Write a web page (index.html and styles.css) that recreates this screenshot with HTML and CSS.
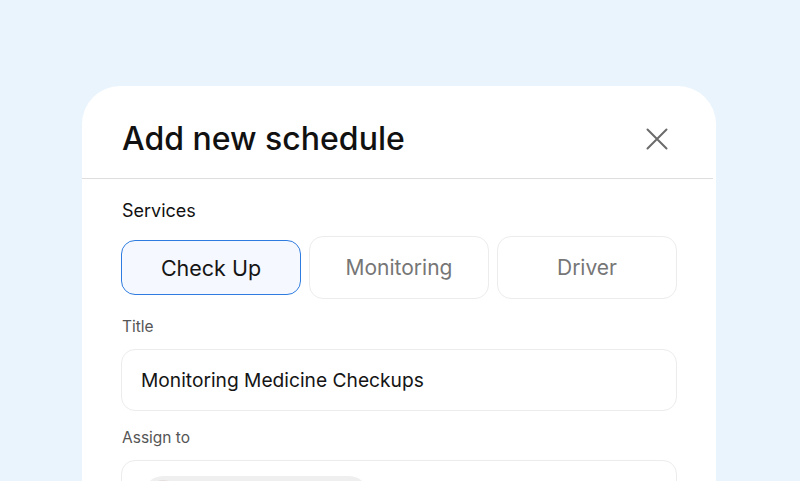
FILE: index.html
```html
<!DOCTYPE html>
<html>
<head>
<meta charset="utf-8">
<link rel="stylesheet" href="styles.css">
</head>
<body>
<div class="card">
  <div class="card-header">
    <h1 class="card-title">Add new schedule</h1>
    <button class="close-btn" aria-label="Close">
      <svg width="22" height="22" viewBox="0 0 22 22"><path d="M1.5 1.5 L20.5 20.5 M20.5 1.5 L1.5 20.5" stroke="#6b6b6b" stroke-width="2" stroke-linecap="round" fill="none"/></svg>
    </button>
  </div>
  <div class="card-body">
    <div class="field-label strong">Services</div>
    <div class="services">
      <div class="service selected">Check Up</div>
      <div class="service">Monitoring</div>
      <div class="service">Driver</div>
    </div>
    <div class="field-label">Title</div>
    <div class="input">Monitoring Medicine Checkups</div>
    <div class="field-label">Assign to</div>
    <div class="input assign">
      <div class="chip"><span class="avatar"></span></div>
    </div>
  </div>
</div>
</body>
</html>
```
FILE: styles.css
```css
* { box-sizing: border-box; }
html, body { margin: 0; padding: 0; }
body {
  background: #eaf4fd;
  font-family: Inter, "Noto Sans", sans-serif;
  width: 800px;
  height: 481px;
  overflow: hidden;
}
.card {
  margin: 86px 0 0 82px;
  width: 634px;
  height: 600px;
  background: #ffffff;
  border-radius: 38px 38px 0 0;
}
.card-header {
  height: 93px;
  display: flex;
  align-items: center;
  justify-content: space-between;
  padding: 12px 45px 0 40px;
  border-bottom: 1px solid #dedede;
  margin-right: 3px;
}
.card-title {
  margin: 0;
  font-size: 32px;
  font-weight: 500;
  color: #111;
}
.close-btn {
  border: 0;
  background: none;
  padding: 0;
  width: 22px;
  height: 22px;
  display: flex;
  margin-top: 2px;
}
.card-body {
  padding: 21px 39px 0 39px;
}
.field-label {
  font-size: 15.5px;
  color: #555;
  font-weight: 400;
  margin: 0 0 13px 1px;
}
.field-label.strong {
  font-size: 18px;
  color: #111;
  font-weight: 400;
  margin-bottom: 15px;
}
.services {
  display: grid;
  grid-template-columns: 1fr 1fr 1fr;
  gap: 8px;
  margin-bottom: 18px;
}
.service {
  height: 63px;
  border: 1px solid #ececec;
  border-radius: 14px;
  display: flex;
  align-items: center;
  justify-content: center;
  font-size: 21px;
  color: #767676;
}
.service.selected {
  height: 55px;
  margin: 4px 0;
  border: 1.5px solid #2f7ce0;
  background: #f5f8fe;
  color: #151515;
  font-size: 21.5px;
  font-weight: 400;
}
.input {
  height: 62px;
  border: 1px solid #ececec;
  border-radius: 14px;
  display: flex;
  align-items: center;
  padding: 0 19px;
  font-size: 19.2px;
  color: #151515;
  margin-bottom: 17px;
}
.input.assign {
  align-items: flex-start;
  padding-top: 15px;
}
.chip {
  width: 226px;
  height: 40px;
  border-radius: 20px;
  background: #efefef;
  display: flex;
  align-items: center;
  padding: 0 4px;
  margin-left: 2px;
}
.avatar {
  width: 32px;
  height: 32px;
  border-radius: 50%;
  background: #e4dede;
}
```
